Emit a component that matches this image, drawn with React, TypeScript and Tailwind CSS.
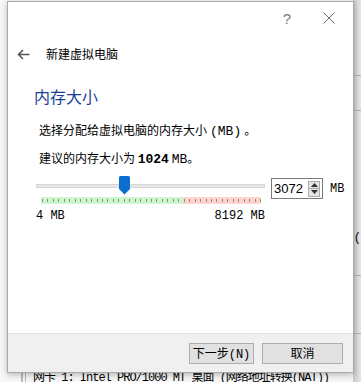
const cjk = { fontFamily: '"Noto Sans CJK SC", "Noto Sans", sans-serif' };
const mono = { fontFamily: '"Liberation Mono", "Noto Sans CJK SC", monospace' };

const Ticks = () => {
  const ticks = Array.from({ length: 41 }, (_, i) => i);
  return (
    <div className="relative h-[7px] w-[220px] flex">
      <div className="h-full w-[142px] bg-[#ccf7cc]" />
      <div className="h-full flex-1 bg-[#fdd3cf]" />
      {ticks.map((i) => (
        <div
          key={i}
          className="absolute top-[2px] h-[3px] w-px bg-[#8a8a8a]"
          style={{ left: Math.round(1 + i * 5.45) }}
        />
      ))}
    </div>
  );
};

const Spin = () => (
  <div className="flex h-[21px] w-[52px] items-center border border-[#7a7a7a] bg-white">
    <span className="flex-1 pl-[2px] text-[13px] text-black" style={{ fontFamily: '"Liberation Sans", sans-serif' }}>
      3072
    </span>
    <div className="mr-[2px] flex h-[16px] w-[12px] flex-col border border-[#adadad] bg-[#e5e5e5]">
      <div className="flex flex-1 items-center justify-center border-b border-[#adadad]">
        <svg width="7" height="4" viewBox="0 0 7 4"><path d="M3.5 0L7 4H0z" fill="#333" /></svg>
      </div>
      <div className="flex flex-1 items-center justify-center">
        <svg width="7" height="4" viewBox="0 0 7 4"><path d="M0 0h7L3.5 4z" fill="#333" /></svg>
      </div>
    </div>
  </div>
);

export default function App() {
  return (
    <div className="relative h-[382px] w-[361px] overflow-hidden bg-[#f7f7f7]">
      {/* background window bits */}
      <div className="absolute right-0 top-0 h-full w-[8px] bg-gradient-to-r from-[#c8c8c8] to-[#e8e8e8]">
        <div className="mt-[75px] h-px bg-[#b0b0b0]" />
        <div className="mt-[34px] h-px bg-[#b0b0b0]" />
        <div className="mt-[164px] h-px bg-[#b0b0b0]" />
        <div className="mt-[57px] h-px bg-[#b0b0b0]" />
      </div>
      <div className="absolute right-0 top-[229px] text-[12px] text-black" style={mono}>(</div>
      <div className="absolute left-[21px] top-[372px] h-[10px] w-[2px] bg-[#bbb]" />
      <div className="absolute left-[25px] top-[372px] h-[10px] w-px bg-[#bbb]" />
      <div
        className="absolute left-[33px] top-[371px] whitespace-nowrap text-[12px] leading-[14px] tracking-[-1px] text-black"
        style={mono}
      >
        网卡 1: Intel PRO/1000 MT 桌面 (网络地址转换(NAT))
      </div>

      {/* dialog */}
      <div
        className="absolute left-[7px] top-[1px] flex h-[372px] w-[347px] flex-col border border-[#a9a9a9] bg-white shadow-[0_2px_6px_rgba(0,0,0,0.25)]"
        style={cjk}
      >
        <div className="flex h-[32px] items-center justify-end gap-[32px] pr-[18px] text-[#7a7a7a]">
          <span className="text-[15px] leading-none" style={{ fontFamily: '"Liberation Sans", sans-serif' }}>?</span>
          <svg width="12" height="12" viewBox="0 0 12 12">
            <path d="M0.5 0.5L11.5 11.5M11.5 0.5L0.5 11.5" stroke="#6e6e6e" strokeWidth="1" />
          </svg>
        </div>

        <div className="flex h-[40px] items-center pl-[9px]">
          <svg width="13" height="11" viewBox="0 0 13 11" className="mr-[16px]">
            <path d="M12.5 5.5H1.5M6 1L1.5 5.5L6 10" fill="none" stroke="#555" strokeWidth="1.5" />
          </svg>
          <span className="text-[12px] text-black">新建虚拟电脑</span>
        </div>

        <div className="flex flex-1 flex-col pl-[26px]">
          <div className="mt-[12px] text-[16px] leading-[20px] text-[#1c3f94]">内存大小</div>
          <div className="mt-[16px] pl-[5px] text-[12px] leading-[16px] text-black">
            选择分配给虚拟电脑的内存大小<span className="mx-[3px] text-[13px]" style={mono}>(MB)</span>。
          </div>
          <div className="mt-[10px] pl-[5px] text-[12px] leading-[16px] text-black">
            建议的内存大小为 <span className="text-[13px] font-bold" style={mono}>1024</span>{' '}
            <span className="text-[13px]" style={mono}>MB</span>。
          </div>

          <div className="mt-[8px] flex items-start">
            <div className="flex w-[231px] flex-col pl-[2px]">
              <div className="relative h-[20px]">
                <div className="absolute left-0 right-0 top-[8px] h-[4px] border border-[#d6d6d6] bg-[#e7e7e7]" />
                <svg className="absolute left-[83px] top-0" width="11" height="19" viewBox="0 0 11 19">
                  <path d="M0 1.5Q0 0 1.5 0H9.5Q11 0 11 1.5V13L5.5 18.5L0 13z" fill="#0a6fd0" />
                </svg>
              </div>
              <div className="mt-[1px] pl-[5px]">
                <Ticks />
              </div>
              <div className="mt-[5px] flex justify-between text-[12px] leading-[14px] text-black" style={mono}>
                <span>4 MB</span>
                <span>8192 MB</span>
              </div>
            </div>
            <div className="ml-[6px] mt-[2px] flex items-center">
              <Spin />
              <span className="ml-[7px] text-[12px] text-black" style={mono}>MB</span>
            </div>
          </div>
        </div>

        <div className="flex h-[39px] items-center justify-end gap-[8px] border-t border-[#dfdfdf] bg-[#f0f0f0] pr-[10px]">
          <button className="h-[21px] w-[65px] border border-[#adadad] bg-[#e1e1e1] text-[12px] text-black">
            下一步<span style={mono}>(N)</span>
          </button>
          <button className="h-[21px] w-[81px] border border-[#adadad] bg-[#e1e1e1] text-[12px] text-black">
            取消
          </button>
        </div>
      </div>
    </div>
  );
}
